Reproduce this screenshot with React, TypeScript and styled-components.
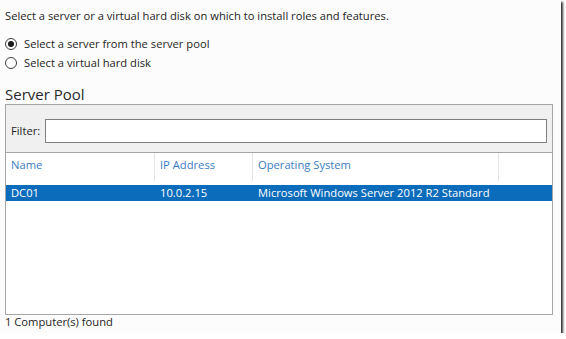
import React from "react";
import styled, { createGlobalStyle } from "styled-components";

const Global = createGlobalStyle`
  html, body { margin: 0; padding: 0; background: #ffffff; }
  body { font-family: "Open Sans", "Noto Sans", "Liberation Sans", sans-serif; }
  * { box-sizing: border-box; }
`;

const Frame = styled.div`
  width: 561px;
  height: 333px;
  background: #fcfcfc;
  box-shadow: 2px 2px 2px rgba(0, 0, 0, 0.8);
  padding: 8px 0 0 5px;
  display: flex;
  flex-direction: column;
  color: #1e1e1e;
  font-size: 11.2px;
`;

const Intro = styled.div`
  height: 16px;
  line-height: 16px;
  white-space: nowrap;
`;

const RadioGroup = styled.div`
  margin-top: 12px;
  display: flex;
  flex-direction: column;
  gap: 3px;
`;

const RadioRow = styled.label`
  display: flex;
  align-items: center;
  gap: 7px;
  height: 16px;
  line-height: 16px;
  white-space: nowrap;
`;

const RadioCircle = styled.span<{ $checked?: boolean }>`
  width: 12px;
  height: 12px;
  border-radius: 50%;
  border: 1px solid #3a3a3a;
  background: #ffffff;
  display: flex;
  align-items: center;
  justify-content: center;
  &::after {
    content: "";
    width: 6px;
    height: 6px;
    border-radius: 50%;
    background: ${(p) => (p.$checked ? "#1a1a1a" : "transparent")};
  }
`;

const Heading = styled.div`
  margin-top: 14px;
  font-size: 15px;
  line-height: 18px;
  height: 18px;
  color: #2a2a2a;
`;

const Panel = styled.div`
  margin-top: 1px;
  width: 548px;
  height: 211px;
  border: 1px solid #a6a6a6;
  display: flex;
  flex-direction: column;
`;

const FilterBar = styled.div`
  height: 48px;
  background: #f0f0f0;
  display: flex;
  align-items: center;
  padding: 4px 5px 0 5px;
  gap: 4px;
  border-bottom: 1px solid #a6a6a6;
`;

const FilterLabel = styled.span`
  width: 30px;
  color: #1e1e1e;
`;

const FilterInput = styled.div`
  flex: 1;
  height: 24px;
  border: 1px solid #7e7e7e;
  background: #ffffff;
`;

const List = styled.div`
  flex: 1;
  background: #ffffff;
  display: flex;
  flex-direction: column;
`;

const HeaderRow = styled.div`
  display: grid;
  grid-template-columns: 149px 98px 246px 1fr;
  height: 28px;
`;

const HeaderCell = styled.div<{ $divider?: boolean }>`
  padding-left: 5px;
  line-height: 24px;
  color: #3b7dc4;
  border-right: ${(p) => (p.$divider ? "1px solid #e4e4e4" : "none")};
  white-space: nowrap;
`;

const DataRow = styled.div<{ $selected?: boolean }>`
  margin-top: 4px;
  display: grid;
  grid-template-columns: 149px 98px 246px 1fr;
  height: 16px;
  line-height: 16px;
  background: ${(p) => (p.$selected ? "#0b6cbb" : "transparent")};
  color: ${(p) => (p.$selected ? "#ffffff" : "#1e1e1e")};
`;

const DataCell = styled.div`
  padding-left: 5px;
  white-space: nowrap;
`;

const Footer = styled.div`
  margin-top: 0px;
  line-height: 14px;
  height: 14px;
`;

export default function App() {
  return (
    <>
      <Global />
      <Frame>
        <Intro>Select a server or a virtual hard disk on which to install roles and features.</Intro>
        <RadioGroup>
          <RadioRow>
            <RadioCircle $checked />
            Select a server from the server pool
          </RadioRow>
          <RadioRow>
            <RadioCircle />
            Select a virtual hard disk
          </RadioRow>
        </RadioGroup>
        <Heading>Server Pool</Heading>
        <Panel>
          <FilterBar>
            <FilterLabel>Filter:</FilterLabel>
            <FilterInput />
          </FilterBar>
          <List>
            <HeaderRow>
              <HeaderCell $divider>Name</HeaderCell>
              <HeaderCell $divider>IP Address</HeaderCell>
              <HeaderCell $divider>Operating System</HeaderCell>
              <HeaderCell />
            </HeaderRow>
            <DataRow $selected>
              <DataCell>DC01</DataCell>
              <DataCell>10.0.2.15</DataCell>
              <DataCell>Microsoft Windows Server 2012 R2 Standard</DataCell>
              <DataCell />
            </DataRow>
          </List>
        </Panel>
        <Footer>1 Computer(s) found</Footer>
      </Frame>
    </>
  );
}
